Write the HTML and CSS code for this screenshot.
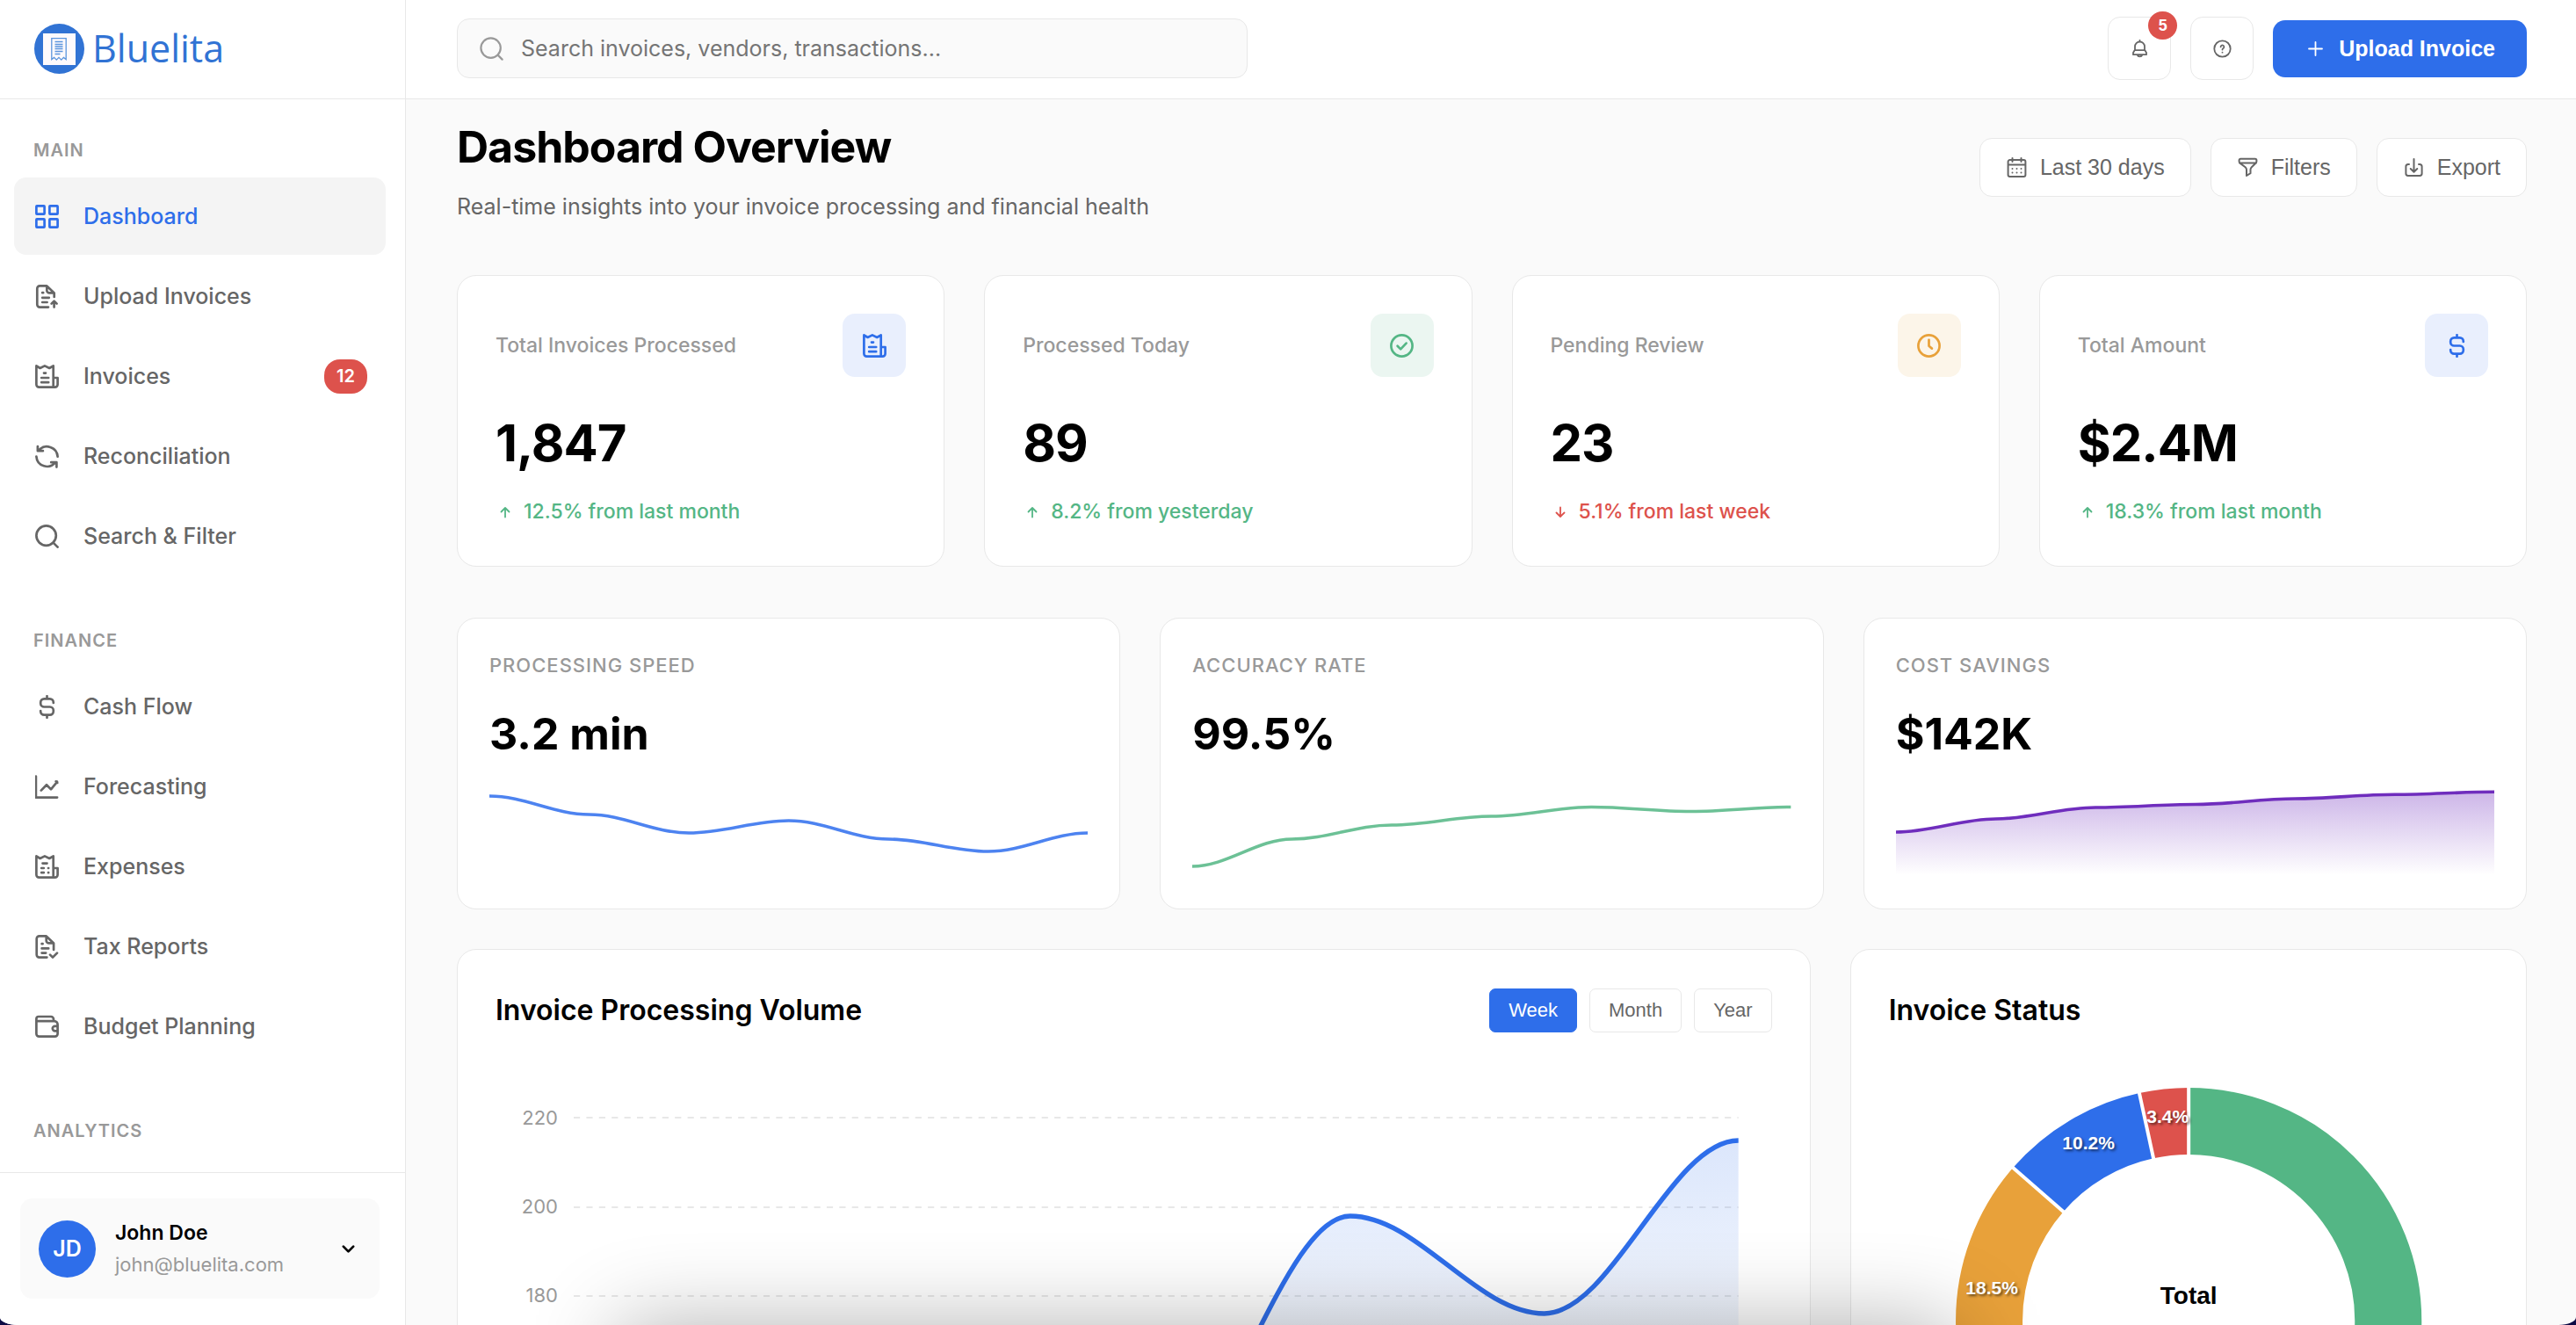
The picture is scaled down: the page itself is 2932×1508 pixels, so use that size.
FILE: index.html
```
<!DOCTYPE html>
<html lang="en">
<head>
<meta charset="utf-8">
<title>Bluelita - Dashboard Overview</title>
<meta name="viewport" content="width=device-width, initial-scale=1">
<link rel="stylesheet" href="styles.css">
</head>
<body>
<svg class="sprite" aria-hidden="true">
  <symbol id="i-grid" viewBox="0 0 27 27"><rect x="1.4" y="1.4" width="9.2" height="9.2" rx=".6"/><rect x="16.4" y="1.4" width="9.2" height="9.2" rx=".6"/><rect x="1.4" y="16.4" width="9.2" height="9.2" rx=".6"/><rect x="16.4" y="16.4" width="9.2" height="9.2" rx=".6"/></symbol>
  <symbol id="i-upload" viewBox="0 0 27 27"><path d="M15 25.6H5.3a3 3 0 0 1-3-3V4.4a3 3 0 0 1 3-3h8l8.4 8V14M13.3 1.8v4.6a3 3 0 0 0 3 3h5M8.2 9.2h1M8.2 14.8h7.6M8.2 20h5.4M21.6 25.6V19M18.6 21.6l3-3 3 3"/></symbol>
  <symbol id="i-receipt" viewBox="0 0 27 27"><path d="M1.4 1.4 5.6 4 10.9 1.4 16.2 4l4.5-2.6v24.2H4.4a3 3 0 0 1-3-3zM20.7 15h4.9v7.6a3 3 0 0 1-3 3h-1.9M10 9.6h2M7.2 15h8M7.2 20.2h8"/></symbol>
  <symbol id="i-expense" viewBox="0 0 27 27"><path d="M1.4 1.4 5.6 4 10.9 1.4 16.2 4l4.5-2.6v24.2H4.4a3 3 0 0 1-3-3zM20.7 15h4.9v7.6a3 3 0 0 1-3 3h-1.9M8.5 9.6h5M7.2 15h2.6M15 15h.2M7.2 20.2h2.6M15 20.2h.2"/></symbol>
  <symbol id="i-sync" viewBox="0 0 27 27"><path d="M4.2 6.6A12.2 12.2 0 0 1 25.6 13.6M2.9 2v5.2h6M1.4 13.6a12.2 12.2 0 0 0 21.6 6.8M24.4 25.6v-5.4h-6.2"/></symbol>
  <symbol id="i-search" viewBox="0 0 27 27"><circle cx="12.6" cy="12.6" r="11.2"/><path d="m20.6 20.6 5 5"/></symbol>
  <symbol id="i-dollar" viewBox="0 0 27 27"><path d="M13.5 1.2v3M13.5 22.8v3M20.8 9V8.4a4 4 0 0 0-4-4h-6.6a4 4 0 0 0-4 4v1.1a4 4 0 0 0 4 4h6.6a4 4 0 0 1 4 4v1.1a4 4 0 0 1-4 4h-6.6a4 4 0 0 1-4-4V18"/></symbol>
  <symbol id="i-trend" viewBox="0 0 27 27"><path d="M.9 1.6v24h24.2M6.8 17.6l6.2-6.4 5 5.2 6.8-8.2M23.6 7.4l1.4.2.2 1.4"/></symbol>
  <symbol id="i-tax" viewBox="0 0 27 27"><path d="M13.4 25.6H4.7a3 3 0 0 1-3-3V4.4a3 3 0 0 1 3-3h8l8.4 8V17M12.7 1.8v4.6a3 3 0 0 0 3 3h5M7.6 10.2h1M7.6 15.4h7.6M7.6 20.6h4.6M17 22.6l3 3 5-5"/></symbol>
  <symbol id="i-wallet" viewBox="0 0 27 27"><path d="M1.4 6.2V4.6a2.6 2.6 0 0 1 2.6-2.6h14a3 3 0 0 1 3 3v1.6M1.4 7.2h20.4a3.8 3.8 0 0 1 3.8 3.8v10.6a3 3 0 0 1-3 3H4.4a3 3 0 0 1-3-3V5M25.6 12.8h-3a2.8 2.8 0 0 0 0 5.6h3"/></symbol>
  <symbol id="i-check" viewBox="0 0 27 27"><circle cx="13.5" cy="13.5" r="12.1"/><path d="m8.6 13.8 3.6 3.6 6.4-6.8"/></symbol>
  <symbol id="i-clock" viewBox="0 0 27 27"><circle cx="13.5" cy="13.5" r="12.1"/><path d="M13.5 6.8v7l3.4 2.8"/></symbol>
  <symbol id="i-up" viewBox="0 0 22 22"><path d="M11 16.5V6.5M6.5 10.5 11 6l4.5 4.5"/></symbol>
  <symbol id="i-down" viewBox="0 0 22 22"><path d="M11 5.5v10M6.5 11.5 11 16l4.5-4.5"/></symbol>
  <symbol id="i-bell" viewBox="0 0 25 25"><path d="M12.5 2.8v1.8M7 14V10a5.5 5.5 0 0 1 11 0v4M6.6 14.2h11.8l1.6 2.8v2.2H5V17zM9.8 19.6a2.8 2.3 0 0 0 5.4 0"/></symbol>
  <symbol id="i-help" viewBox="0 0 25 25"><circle cx="12.5" cy="12.5" r="9.2"/><path d="M10.6 10.4a1.9 1.9 0 1 1 2.9 1.6c-.7.4-1 .8-1 1.6M12.5 16.6v.1"/></symbol>
  <symbol id="i-plus" viewBox="0 0 25 25"><path d="M12.5 5v15M5 12.5h15"/></symbol>
  <symbol id="i-calendar" viewBox="0 0 25 25"><path d="M2.6 9.6h19.8M4.6 4h15.8a2 2 0 0 1 2 2v15a2 2 0 0 1-2 2H4.6a2 2 0 0 1-2-2V6a2 2 0 0 1 2-2zM7.5 2v4M17.5 2v4M7.5 14v.1M12.5 14v.1M17.5 14v.1M7.5 18.4v.1M12.5 18.4v.1M17.5 18.4v.1"/></symbol>
  <symbol id="i-filter" viewBox="0 0 25 25"><path d="M4.2 2.8h16.6a1.6 1.6 0 0 1 1.6 1.6v1.4c0 .8-.4 1.3-1 1.9l-4.6 4.5c-.9.9-1.3 1.5-1.3 2.8v4.2L11 22v-7c0-1.3-.6-2-1.4-2.8L3.8 7.9c-.8-.7-1.2-1.2-1.2-2.1V4.4a1.6 1.6 0 0 1 1.6-1.6zM3 7.4h19"/></symbol>
  <symbol id="i-export" viewBox="0 0 25 25"><path d="M12.5 3v14.5M8.7 14l3.8 3.8 3.8-3.8M7 9H6a2.6 2.6 0 0 0-2.6 2.6v8A2.4 2.4 0 0 0 5.8 22h13.4a2.4 2.4 0 0 0 2.4-2.4v-8A2.6 2.6 0 0 0 19 9h-1"/></symbol>
</svg>

<div class="app">
  <aside class="sidebar">
    <a class="brand" href="#">
      <svg class="brand-mark" viewBox="0 0 57 57" aria-hidden="true">
        <circle cx="28.5" cy="28.5" r="28.5" fill="#3173d4"/>
        <rect x="10" y="11" width="37" height="36" fill="#fdfafc"/>
        <path d="M19.8 40.6V16.6h16.4v24l-2.8-2.2-2.6 2.7-2.8-2.7-2.7 2.7-2.7-2.7zM23.5 20.5h9M23.5 23.5h9M23.5 26h9M23.5 28.5h9M23.5 31.5h9M23.5 34.5h6" fill="none" stroke="#5b95dd" stroke-width="1.3"/>
      </svg>
      <span>Bluelita</span>
    </a>
    <nav class="nav">
      <section class="nav-section">
        <h2 class="nav-label">MAIN</h2>
        <div class="nav-list">
          <a class="nav-item active" href="#"><svg class="icon"><use href="#i-grid"/></svg>Dashboard</a>
          <a class="nav-item" href="#"><svg class="icon"><use href="#i-upload"/></svg>Upload Invoices</a>
          <a class="nav-item" href="#"><svg class="icon"><use href="#i-receipt"/></svg>Invoices<span class="pill">12</span></a>
          <a class="nav-item" href="#"><svg class="icon"><use href="#i-sync"/></svg>Reconciliation</a>
          <a class="nav-item" href="#"><svg class="icon"><use href="#i-search"/></svg>Search &amp; Filter</a>
        </div>
      </section>
      <section class="nav-section">
        <h2 class="nav-label">FINANCE</h2>
        <div class="nav-list">
          <a class="nav-item" href="#"><svg class="icon"><use href="#i-dollar"/></svg>Cash Flow</a>
          <a class="nav-item" href="#"><svg class="icon"><use href="#i-trend"/></svg>Forecasting</a>
          <a class="nav-item" href="#"><svg class="icon"><use href="#i-expense"/></svg>Expenses</a>
          <a class="nav-item" href="#"><svg class="icon"><use href="#i-tax"/></svg>Tax Reports</a>
          <a class="nav-item" href="#"><svg class="icon"><use href="#i-wallet"/></svg>Budget Planning</a>
        </div>
      </section>
      <section class="nav-section">
        <h2 class="nav-label">ANALYTICS</h2>
      </section>
    </nav>
    <div class="account">
      <button class="account-card" type="button">
        <span class="avatar">JD</span>
        <span class="account-text"><span class="account-name">John Doe</span><span class="account-mail">john@bluelita.com</span></span>
        <svg class="chevron" viewBox="0 0 22 22" aria-hidden="true"><path d="m6 8.5 5 5 5-5"/></svg>
      </button>
    </div>
  </aside>

  <div class="main">
    <header class="topbar">
      <label class="search">
        <svg class="icon" aria-hidden="true"><use href="#i-search"/></svg>
        <input type="search" placeholder="Search invoices, vendors, transactions..." aria-label="Search">
      </label>
      <div class="topbar-actions">
        <button class="icon-btn" type="button" aria-label="Notifications"><svg class="icon-sm"><use href="#i-bell"/></svg><span class="count">5</span></button>
        <button class="icon-btn" type="button" aria-label="Help"><svg class="icon-sm"><use href="#i-help"/></svg></button>
        <button class="btn-primary" type="button"><svg class="icon-sm"><use href="#i-plus"/></svg>Upload Invoice</button>
      </div>
    </header>

    <main class="content">
      <div class="page-head">
        <div class="page-title">
          <h1>Dashboard Overview</h1>
          <p>Real-time insights into your invoice processing and financial health</p>
        </div>
        <div class="page-actions">
          <button class="btn" type="button"><svg class="icon-sm"><use href="#i-calendar"/></svg>Last 30 days</button>
          <button class="btn" type="button"><svg class="icon-sm"><use href="#i-filter"/></svg>Filters</button>
          <button class="btn" type="button"><svg class="icon-sm"><use href="#i-export"/></svg>Export</button>
        </div>
      </div>

      <div class="stats">
        <article class="card stat">
          <div class="stat-head"><h3>Total Invoices Processed</h3><span class="tile blue"><svg class="icon"><use href="#i-receipt"/></svg></span></div>
          <p class="stat-value">1,847</p>
          <p class="change up"><svg><use href="#i-up"/></svg>12.5% from last month</p>
        </article>
        <article class="card stat">
          <div class="stat-head"><h3>Processed Today</h3><span class="tile green"><svg class="icon"><use href="#i-check"/></svg></span></div>
          <p class="stat-value">89</p>
          <p class="change up"><svg><use href="#i-up"/></svg>8.2% from yesterday</p>
        </article>
        <article class="card stat">
          <div class="stat-head"><h3>Pending Review</h3><span class="tile orange"><svg class="icon"><use href="#i-clock"/></svg></span></div>
          <p class="stat-value">23</p>
          <p class="change down"><svg><use href="#i-down"/></svg>5.1% from last week</p>
        </article>
        <article class="card stat">
          <div class="stat-head"><h3>Total Amount</h3><span class="tile blue"><svg class="icon"><use href="#i-dollar"/></svg></span></div>
          <p class="stat-value">$2.4M</p>
          <p class="change up"><svg><use href="#i-up"/></svg>18.3% from last month</p>
        </article>
      </div>

      <div class="minis">
        <article class="card mini">
          <h3>PROCESSING SPEED</h3>
          <p class="mini-value">3.2 min</p>
          <svg class="spark" viewBox="0 0 682 108" preserveAspectRatio="none"><path stroke="#4d83f0" d="M0 16C40 16 74 37 113.700 37S187 58 227.300 58 301 44 341 44 415 65 454.700 65 528 79 568.300 79 642 58 682 58"/></svg>
        </article>
        <article class="card mini">
          <h3>ACCURACY RATE</h3>
          <p class="mini-value">99.5%</p>
          <svg class="spark" viewBox="0 0 682 108" preserveAspectRatio="none"><path stroke="#6cc196" d="M0 96C40 96 74 65 113.700 65S187 49 227.300 49 301 39 341 39 415 28.500 454.700 28.500 528 33.500 568.300 33.500 642 28.500 682 28.500"/></svg>
        </article>
        <article class="card mini">
          <h3>COST SAVINGS</h3>
          <p class="mini-value">$142K</p>
          <svg class="spark" viewBox="0 0 682 108" preserveAspectRatio="none">
            <defs><linearGradient id="g-cost" x1="0" y1="0" x2="0" y2="1"><stop offset="0" stop-color="#6f2dbd" stop-opacity=".35"/><stop offset="1" stop-color="#6f2dbd" stop-opacity="0"/></linearGradient></defs>
            <path fill="url(#g-cost)" stroke="none" d="M0 57C40 57 74 42 113.700 42S187 29 227.300 29 301 25.500 341 25.500 415 19 454.700 19 528 14.300 568.300 14.300 642 11.300 682 11.300V106H0z"/>
            <path stroke="#6f2dbd" d="M0 57C40 57 74 42 113.700 42S187 29 227.300 29 301 25.500 341 25.500 415 19 454.700 19 528 14.300 568.300 14.300 642 11.300 682 11.300"/>
          </svg>
        </article>
      </div>

      <div class="charts">
        <article class="card chart">
          <div class="chart-head">
            <h2>Invoice Processing Volume</h2>
            <div class="tabs">
              <button class="tab selected" type="button">Week</button>
              <button class="tab" type="button">Month</button>
              <button class="tab" type="button">Year</button>
            </div>
          </div>
          <svg class="plot" viewBox="0 0 1453 630" role="img" aria-label="Invoice processing volume">
            <defs><linearGradient id="g-vol" x1="0" y1="0" x2="0" y2="1"><stop offset="0" stop-color="#2e6eea" stop-opacity=".17"/><stop offset=".7" stop-color="#2e6eea" stop-opacity="0"/></linearGradient></defs>
            <g class="axis"><text x="71" y="76">220</text><text x="71" y="177">200</text><text x="71" y="278">180</text></g>
            <path class="grid" d="M89 68H1415M89 170H1415M89 271H1415M89 373H1415M89 474H1415"/>
            <path fill="url(#g-vol)" d="M89 551C166 551 233 485 310 485S454 561 531 561 675 464 752 464 896 180 973 180 1117 291 1194 291 1338 94 1415 94V576H89z"/>
            <path class="line" d="M89 551C166 551 233 485 310 485S454 561 531 561 675 464 752 464 896 180 973 180 1117 291 1194 291 1338 94 1415 94"/>
          </svg>
        </article>
        <article class="card chart">
          <div class="chart-head"><h2>Invoice Status</h2></div>
          <svg class="plot" viewBox="0 0 682 600" role="img" aria-label="Invoice status">
            <g transform="rotate(-90 341 299)" fill="none" stroke-width="76">
              <circle cx="341" cy="299" r="227" pathLength="100" stroke="#54b685" stroke-dasharray="67.9 32.1"/>
              <circle cx="341" cy="299" r="227" pathLength="100" stroke="#e8a13a" stroke-dasharray="18.5 81.5" stroke-dashoffset="-67.9"/>
              <circle cx="341" cy="299" r="227" pathLength="100" stroke="#2e6eea" stroke-dasharray="10.2 89.8" stroke-dashoffset="-86.4"/>
              <circle cx="341" cy="299" r="227" pathLength="100" stroke="#dd524c" stroke-dasharray="3.4 96.6" stroke-dashoffset="-96.6"/>
            </g>
            <g stroke="#fff" stroke-width="4">
              <path d="M341 113V31"/>
              <path d="M341 113V31" transform="rotate(-12.24 341 299)"/>
              <path d="M341 113V31" transform="rotate(-48.96 341 299)"/>
              <path d="M341 113V31" transform="rotate(-115.56 341 299)"/>
            </g>
            <g class="slice-label"><text x="317" y="74">3.4%</text><text x="227" y="104">10.2%</text><text x="117" y="269">18.5%</text></g>
            <text class="total" x="341" y="280">Total</text>
          </svg>
        </article>
      </div>
    </main>
  </div>
</div>
<div class="under-shadow"></div>
</body>
</html>
```
FILE: styles.css
```
* { box-sizing: border-box; margin: 0; padding: 0; }
html, body { height: 100%; }
body { background: #0d0b45; color: #000; font-family: Inter, sans-serif; font-size: 25px; overflow: hidden; }
button, input { font: inherit; color: inherit; border: 0; background: none; }
button { cursor: pointer; }
a { color: inherit; text-decoration: none; }
svg { display: block; flex: none; }
.sprite { position: absolute; width: 0; height: 0; }

.icon { width: 27px; height: 27px; stroke-width: 2.7; }
.icon-sm { width: 25px; height: 25px; stroke-width: 1.8; }
.icon, .icon-sm, .chevron, .change svg { fill: none; stroke: currentColor; stroke-linecap: round; stroke-linejoin: round; }

.app { display: grid; grid-template-columns: 462px minmax(0, 1fr); height: 100vh; background: #fafafa; border-radius: 0 0 20px 20px / 0 0 9px 9px; overflow: hidden; }

/* Sidebar */
.sidebar { display: flex; flex-direction: column; min-height: 0; background: #fff; border-right: 1px solid #e8e8e8; }
.brand { display: flex; align-items: center; gap: 9px; flex: none; height: 113px; padding: 0 39px 2px; border-bottom: 1px solid #e8e8e8; color: #3173d4; font: 43px/60px "Open Sans", "Noto Sans", sans-serif; }
.brand-mark { width: 57px; height: 57px; }
.nav { flex: 1; min-height: 0; overflow: hidden; padding: 45px 22px 0 16px; display: flex; flex-direction: column; gap: 62px; }
.nav-label { padding-left: 22px; margin-bottom: 18px; color: #999; font-size: 20px; line-height: 26px; font-weight: 600; letter-spacing: 1px; }
.nav-list { display: flex; flex-direction: column; gap: 3px; }
.nav-item { display: flex; align-items: center; gap: 28px; height: 88px; padding: 0 21px 0 24px; border-radius: 14px; color: #666; font-weight: 500; line-height: 40px; }
.nav-item.active { background: #f4f4f4; color: #2e6eea; }
.pill { margin-left: auto; padding: 0 14px; border-radius: 18px; background: #dd524c; color: #fff; font-size: 20px; line-height: 39px; font-weight: 600; }
.account { padding: 29px 29px 30px 23px; border-top: 1px solid #e8e8e8; }
.account-card { display: flex; align-items: center; gap: 22px; width: 100%; height: 114px; padding: 0 21px; border-radius: 14px; background: #fafafa; text-align: left; }
.avatar { width: 65px; height: 65px; border-radius: 50%; background: #2e6eea; color: #fff; font-size: 25px; line-height: 65px; font-weight: 600; text-align: center; }
.account-text { display: flex; flex-direction: column; flex: 1; }
.account-name { font-size: 23px; line-height: 37px; font-weight: 600; }
.account-mail { color: #999; font-size: 22px; line-height: 35px; }
.chevron { width: 25px; height: 25px; margin-right: 2px; stroke-width: 2.4; }

/* Top bar */
.main { display: flex; flex-direction: column; min-width: 0; min-height: 0; }
.topbar { display: flex; align-items: center; justify-content: space-between; flex: none; height: 113px; padding: 0 56px 2px 58px; background: #fff; border-bottom: 1px solid #e8e8e8; }
.search { display: flex; align-items: center; gap: 20px; flex: 0 1 900px; height: 68px; padding: 0 25px; border: 1px solid #e8e8e8; border-radius: 14px; background: #fafafa; color: #999; }
.search .icon { stroke-width: 2.2; }
.search input { flex: 1; min-width: 0; outline: 0; }
.search input::placeholder { color: #757575; opacity: 1; }
.topbar-actions, .page-actions { display: flex; align-items: center; gap: 22px; font-family: "Liberation Sans", Arial, sans-serif; }
.icon-btn { position: relative; display: flex; align-items: center; justify-content: center; width: 72px; height: 72px; border: 1px solid #e8e8e8; border-radius: 14px; background: #fff; color: #666; }
.count { position: absolute; top: -7px; right: -8px; width: 33px; border-radius: 16px; background: #dd524c; color: #fff; font-size: 18px; line-height: 32px; font-weight: 700; text-align: center; }
.btn-primary { display: flex; align-items: center; gap: 14px; height: 65px; padding: 0 36px; border-radius: 14px; background: #2e6eea; color: #fff; font-weight: 700; }
.btn { display: flex; align-items: center; gap: 14px; height: 67px; padding: 0 29px; border: 1px solid #e8e8e8; border-radius: 14px; background: #fff; color: #666; }
.btn .icon-sm { stroke-width: 2; }

/* Page */
.content { flex: 1; min-height: 0; overflow: hidden; padding: 14px 56px 58px 58px; }
.page-head { display: flex; align-items: center; justify-content: space-between; margin-bottom: 59px; }
.page-title { display: flex; flex-direction: column; gap: 9px; }
.page-title h1 { font-size: 50px; line-height: 80px; font-weight: 700; letter-spacing: -1px; }
.page-title p { color: #666; line-height: 38px; }
.card { min-width: 0; background: #fff; border: 1px solid #e8e8e8; border-radius: 22px; }

.stats { display: grid; grid-template-columns: repeat(4, minmax(0, 1fr)); gap: 45px; margin-bottom: 58px; }
.stat { padding: 43px; }
.stat-head { display: flex; align-items: center; justify-content: space-between; margin-bottom: 29px; }
.stat-head h3 { color: #999; font-size: 23px; line-height: 37px; font-weight: 500; }
.tile { display: flex; align-items: center; justify-content: center; width: 72px; height: 72px; border-radius: 14px; }
.tile.blue { background: #e9effd; color: #2e6eea; }
.tile.green { background: #ebf6f1; color: #54b685; }
.tile.orange { background: #fcf5e9; color: #e8a13a; }
.stat-value { margin-bottom: 14px; font-size: 58px; line-height: 92px; font-weight: 700; letter-spacing: -1px; }
.change { display: flex; align-items: center; gap: 10px; font-size: 23px; line-height: 37px; font-weight: 500; }
.change svg { width: 22px; height: 22px; stroke-width: 1.8; }
.change.up { color: #54b685; }
.change.down { color: #dd524c; }

.minis { display: grid; grid-template-columns: repeat(3, minmax(0, 1fr)); gap: 45px; margin-bottom: 45px; }
.mini { padding: 36px; }
.mini h3 { margin-bottom: 20px; color: #999; font-size: 22px; line-height: 35px; font-weight: 500; letter-spacing: 1px; }
.mini-value { margin-bottom: 14px; font-size: 50px; line-height: 81px; font-weight: 700; }
.spark { width: 100%; height: 108px; fill: none; stroke-width: 3.6; }

.charts { display: grid; grid-template-columns: minmax(0, 2fr) minmax(0, 1fr); gap: 45px; }
.chart { padding: 43px; }
.chart-head { display: flex; align-items: center; justify-content: space-between; margin-bottom: 28px; }
.chart-head h2 { font-size: 32px; line-height: 52px; font-weight: 600; }
.tabs { display: flex; gap: 14px; font-family: "Liberation Sans", Arial, sans-serif; }
.tab { height: 50px; padding: 0 21px; border: 1px solid #e8e8e8; border-radius: 7px; background: #fff; color: #666; font-size: 22px; }
.tab.selected { border-color: #2e6eea; background: #2e6eea; color: #fff; }
.plot { width: 100%; height: auto; }
.axis { fill: #999; font-size: 22px; text-anchor: end; }
.grid { fill: none; stroke: #e8e8e8; stroke-width: 2; stroke-dasharray: 7.2 7.2; }
.line { fill: none; stroke: #2e6eea; stroke-width: 5.4; }
.slice-label { fill: #fff; font: 700 21px "Liberation Sans", Arial, sans-serif; text-anchor: middle; text-shadow: 2px 2px 3px rgba(0, 0, 0, .55); }
.total { fill: #000; font: 700 28px "Liberation Sans", Arial, sans-serif; text-anchor: middle; }

/* Shadow cast up by the dock under the window */
.under-shadow { position: fixed; top: 100%; left: 24%; right: 24%; height: 160px; box-shadow: 0 0 100px rgba(0, 0, 0, .3); pointer-events: none; }
```
